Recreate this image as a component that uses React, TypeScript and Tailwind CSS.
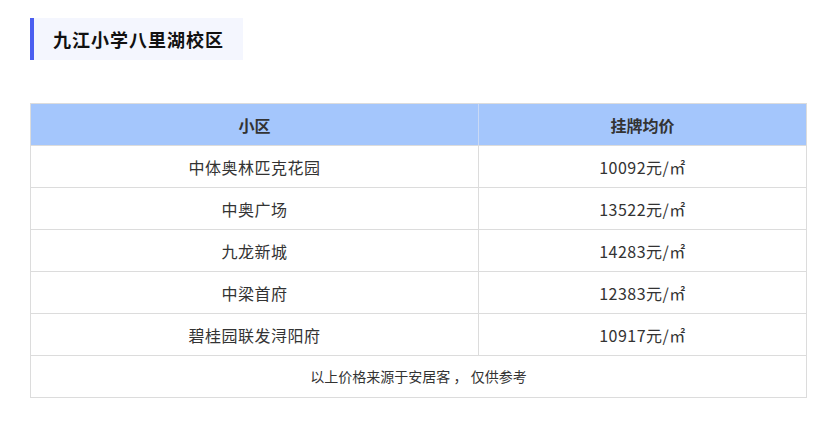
import React from "react";

const rows: [string, string][] = [
  ["中体奥林匹克花园", "10092元/㎡"],
  ["中奥广场", "13522元/㎡"],
  ["九龙新城", "14283元/㎡"],
  ["中梁首府", "12383元/㎡"],
  ["碧桂园联发浔阳府", "10917元/㎡"],
];

export default function App() {
  return (
    <div
      className="w-[831px] h-[425px] bg-white pt-[18px] pl-[30px]"
      style={{ fontFamily: '"Microsoft YaHei", "Noto Sans CJK SC", sans-serif' }}
    >
      <div className="flex h-[42px] w-[213px] items-center border-l-4 border-[#4b5ff0] bg-[#f4f6fe] pl-[19px]">
        <span className="text-[18px] font-bold text-[#111] tracking-[1px]">九江小学八里湖校区</span>
      </div>
      <div className="mt-[43px] w-[777px] border border-[#dcdcdc]">
        <div className="flex h-[41px] bg-[#a4c6fc] text-[16px] font-bold text-[#333]">
          <div className="flex w-[448px] items-center justify-center border-r border-[#c9d9f5]">小区</div>
          <div className="flex flex-1 items-center justify-center">挂牌均价</div>
        </div>
        {rows.map(([a, b]) => (
          <div key={a} className="flex h-[42px] border-t border-[#dcdcdc] text-[16px] text-[#333] tracking-[0.5px]">
            <div className="flex w-[448px] items-center justify-center border-r border-[#dcdcdc]">{a}</div>
            <div className="flex flex-1 items-center justify-center">{b}</div>
          </div>
        ))}
        <div className="flex h-[42px] items-center justify-center border-t border-[#dcdcdc] text-[14px] text-[#333]">
          以上价格来源于安居客 ， 仅供参考
        </div>
      </div>
    </div>
  );
}
